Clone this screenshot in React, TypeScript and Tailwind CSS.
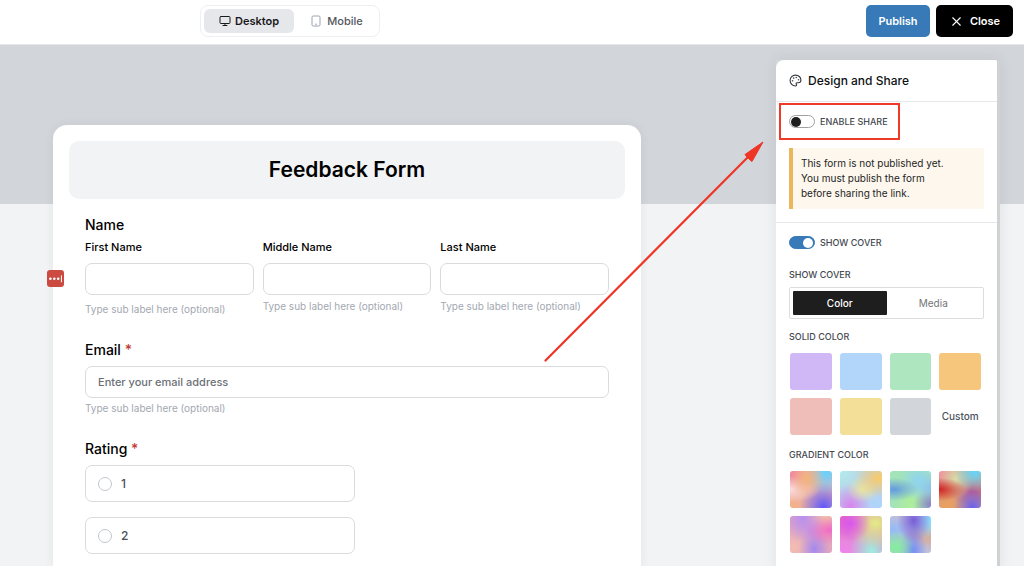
import { useState } from 'react'
import { Monitor, Palette, X } from 'lucide-react'

const solids = [
  { name: 'Purple', className: 'bg-[#d0b8f6]' },
  { name: 'Blue', className: 'bg-[#b2d6f9]' },
  { name: 'Green', className: 'bg-[#aee6bf]' },
  { name: 'Orange', className: 'bg-[#f6c67c]' },
  { name: 'Rose', className: 'bg-[#f0beb8]' },
  { name: 'Yellow', className: 'bg-[#f4df98]' },
  { name: 'Gray', className: 'bg-[#d2d5da]' },
]

const gradients = [
  {
    name: 'Sunrise',
    className:
      'bg-[#e6b0b4] bg-[radial-gradient(at_40%_20%,#f3b57c_0px,transparent_50%),radial-gradient(at_85%_5%,#63d3ff_0px,transparent_45%),radial-gradient(at_0%_50%,#fbdcdf_0px,transparent_50%),radial-gradient(at_80%_98%,#6058f8_0px,transparent_50%),radial-gradient(at_0%_100%,#f5b183_0px,transparent_50%),radial-gradient(at_0%_0%,#f27f9f_0px,transparent_50%)]',
  },
  {
    name: 'Pastel',
    className:
      'bg-[#b9d0ea] bg-[radial-gradient(at_92%_20%,#f9cb68_0px,transparent_45%),radial-gradient(at_55%_50%,#e9e5a0_0px,transparent_50%),radial-gradient(at_25%_95%,#d884ee_0px,transparent_45%),radial-gradient(at_90%_95%,#aed4fb_0px,transparent_50%),radial-gradient(at_0%_0%,#b2ecea_0px,transparent_50%)]',
  },
  {
    name: 'Lagoon',
    className:
      'bg-[#a4e3b8] bg-[radial-gradient(at_10%_50%,#629ae0_0px,transparent_45%),radial-gradient(at_70%_25%,#8fd5ef_0px,transparent_50%),radial-gradient(at_100%_90%,#8a7fc6_0px,transparent_30%),radial-gradient(at_50%_95%,#aeee9a_0px,transparent_60%),radial-gradient(at_100%_45%,#8fb6e8_0px,transparent_50%)]',
  },
  {
    name: 'Ember',
    className:
      'bg-[#d59a80] bg-[radial-gradient(at_0%_50%,#cf2424_0px,transparent_45%),radial-gradient(at_85%_2%,#5fd8ff_0px,transparent_40%),radial-gradient(at_40%_20%,#d8dba8_0px,transparent_50%),radial-gradient(at_80%_98%,#6a60f0_0px,transparent_40%),radial-gradient(at_80%_55%,#c05a80_0px,transparent_50%),radial-gradient(at_20%_95%,#eaa060_0px,transparent_50%),radial-gradient(at_0%_0%,#f58fa0_0px,transparent_45%)]',
  },
  {
    name: 'Blossom',
    className:
      'bg-[#e3a6bd] bg-[radial-gradient(at_30%_5%,#b88ff0_0px,transparent_50%),radial-gradient(at_95%_38%,#f06cc6_0px,transparent_45%),radial-gradient(at_58%_90%,#a488f0_0px,transparent_45%),radial-gradient(at_5%_85%,#f3bdb2_0px,transparent_55%),radial-gradient(at_50%_45%,#cf92dc_0px,transparent_50%),radial-gradient(at_85%_0%,#f3c2a8_0px,transparent_50%)]',
  },
  {
    name: 'Orchid',
    className:
      'bg-[#dd8fc0] bg-[radial-gradient(at_24%_20%,#d955f0_0px,transparent_45%),radial-gradient(at_85%_20%,#e4ec84_0px,transparent_60%),radial-gradient(at_75%_95%,#9eeee2_0px,transparent_50%),radial-gradient(at_10%_95%,#ee84ee_0px,transparent_55%),radial-gradient(at_0%_0%,#ee6aa8_0px,transparent_50%)]',
  },
  {
    name: 'Aurora',
    className:
      'bg-[#c0bfd8] bg-[radial-gradient(at_58%_12%,#7a5cd8_0px,transparent_50%),radial-gradient(at_14%_85%,#7ff09c_0px,transparent_40%),radial-gradient(at_55%_92%,#7088f8_0px,transparent_45%),radial-gradient(at_100%_10%,#84ddfa_0px,transparent_45%),radial-gradient(at_95%_55%,#e0a890_0px,transparent_45%),radial-gradient(at_5%_38%,#92baf8_0px,transparent_45%)]',
  },
]

const subLabel = 'Type sub label here (optional)'

function PhoneIcon() {
  return (
    <svg viewBox="0 0 10 12" className="h-3 w-[10px]" fill="none" stroke="#9ca3af">
      <rect x="1" y="1" width="8" height="10" rx="1.2" />
      <path d="M4.5 9.2h1" strokeLinecap="round" />
    </svg>
  )
}

function Header() {
  return (
    <header className="flex items-center justify-between border-b border-[#e6e8eb] bg-white pt-[5px] pr-[11px] pb-[7px] pl-[200px]">
      <div className="flex h-8 gap-1 rounded-lg border border-[#eeeff1] p-[3px]">
        <button className="flex w-[90px] items-center justify-center gap-1 rounded-md bg-[#e6e7eb] text-[11px] font-semibold text-[#18191b]">
          <Monitor size={12} />
          Desktop
        </button>
        <button className="flex w-[78px] items-center justify-center gap-[6px] text-[11px] font-medium text-[#55585e]">
          <PhoneIcon />
          Mobile
        </button>
      </div>
      <div className="flex h-8 gap-[6px] text-[11px] font-semibold text-white">
        <button className="w-16 rounded-[5px] bg-[#377ab7]">Publish</button>
        <button className="flex w-[77px] items-center justify-center gap-[6px] rounded-[5px] bg-black">
          <X size={15} strokeWidth={1.75} />
          Close
        </button>
      </div>
    </header>
  )
}

function NameField({ id, label, first }: { id: string; label: string; first?: boolean }) {
  return (
    <div>
      <label htmlFor={id} className="block text-[11px] leading-4 font-medium">{label}</label>
      <input id={id} className="mt-2 block h-8 w-full rounded-[7px] border border-[#d9dbdf] bg-white px-3 text-[11px]" />
      <p className={first ? 'mt-2 text-[10px] leading-3 text-[#a3a8b1]' : 'mt-[5px] text-[10px] leading-3 text-[#a3a8b1]'}>
        {subLabel}
      </p>
    </div>
  )
}

function RatingOption({ value }: { value: string }) {
  return (
    <label className="flex h-[37px] items-center gap-[9px] rounded-[7px] border border-[#d9dbdf] px-3 text-[12px] font-medium text-[#4b5058]">
      <input type="radio" name="rating" value={value} className="size-[14px] appearance-none rounded-full border border-[#c3c7ce] checked:border-4" />
      {value}
    </label>
  )
}

function FeedbackForm() {
  return (
    <form className="flex-1 rounded-t-[14px] bg-white p-4 text-black shadow-[0_0_12px_rgba(0,0,0,0.06)]">
      <div className="flex h-[58px] items-center justify-center rounded-[10px] bg-[#f2f3f5]">
        <h1 className="text-[21px] font-semibold">Feedback Form</h1>
      </div>
      <div className="px-4 pt-4">
        <fieldset>
          <legend className="text-[14px] leading-5 font-medium">Name</legend>
          <div className="relative mt-1 grid grid-cols-3 gap-[9px]">
            <NameField id="first" label="First Name" first />
            <NameField id="middle" label="Middle Name" />
            <NameField id="last" label="Last Name" />
            <svg viewBox="0 0 17 17" className="absolute top-[31px] -left-[38px] size-[17px]">
              <rect width="17" height="17" rx="3" fill="#cb4b41" />
              <g fill="#fff">
                <circle cx="3.4" cy="8.7" r="1.3" />
                <circle cx="7.3" cy="8.7" r="1.3" />
                <circle cx="11.2" cy="8.7" r="1.3" />
                <rect x="13.9" y="5.4" width="1" height="6.8" />
              </g>
            </svg>
          </div>
        </fieldset>

        <div className="mt-[25px]">
          <label htmlFor="email" className="block text-[14px] leading-5 font-medium">
            Email <span className="text-[#c23a34]">*</span>
          </label>
          <input
            id="email"
            type="email"
            placeholder="Enter your email address"
            className="mt-[6px] block h-8 w-full rounded-[7px] border border-[#d9dbdf] bg-white px-3 text-[11px] font-medium placeholder:text-[#6b7078]"
          />
          <p className="mt-1 text-[10px] leading-3 text-[#a3a8b1]">{subLabel}</p>
        </div>

        <fieldset className="mt-[25px]">
          <legend className="text-[14px] leading-5 font-medium">
            Rating <span className="text-[#c23a34]">*</span>
          </legend>
          <div className="mt-[6px] flex w-[270px] flex-col gap-[15px]">
            <RatingOption value="1" />
            <RatingOption value="2" />
          </div>
        </fieldset>
      </div>
    </form>
  )
}

function Switch({ label, checked, onChange }: { label: string; checked: boolean; onChange: (value: boolean) => void }) {
  return (
    <label className="flex items-center gap-[5px] text-[9px] leading-3 font-medium text-[#454950]">
      <input
        type="checkbox"
        role="switch"
        checked={checked}
        onChange={(e) => onChange(e.target.checked)}
        className="flex h-[13px] w-[26px] appearance-none items-center rounded-full border border-[#a0a0a0] bg-white px-px before:size-[10px] before:rounded-full before:bg-[#1e1e1e] checked:justify-end checked:border-[#377ab7] checked:bg-[#377ab7] checked:before:bg-white"
      />
      {label}
    </label>
  )
}

function DesignPanel() {
  const [share, setShare] = useState(false)
  const [cover, setCover] = useState(true)

  return (
    <aside className="flex w-[224px] shadow-[0_0_14px_rgba(0,0,0,0.08)]">
      <div className="flex-1 rounded-tl-lg rounded-tr-xs bg-white">
        <div className="flex h-[42px] items-center gap-[6px] border-b border-[#e6e7ea] px-[13px]">
          <Palette size={13} className="text-[#33363b]" />
          <h2 className="text-[12px] font-medium text-[#101113]">Design and Share</h2>
        </div>

        <div className="relative border-b border-[#e6e7ea] px-[13px] pt-[13px] pb-[13px]">
          <Switch label="ENABLE SHARE" checked={share} onChange={setShare} />
          <span className="pointer-events-none absolute top-px left-[3px] h-[37px] w-[121px] border-2 border-[#ee3a26]" />
          <p className="mt-5 border-l-4 border-[#e8b85a] bg-[#fdf7ee] py-2 pr-7 pl-2 text-[10px] leading-[15px] text-[#1e1e1e]">
            This form is not published yet. You must publish the form before sharing the link.
          </p>
        </div>

        <div className="px-[13px] pt-[13px]">
          <Switch label="SHOW COVER" checked={cover} onChange={setCover} />

          <h3 className="mt-5 text-[9px] leading-3 font-medium text-[#454950]">SHOW COVER</h3>
          <div className="mt-[6px] flex h-8 rounded-xs border border-[#dddddf] p-[3px] text-[10px]">
            <button className="flex-1 rounded-[1px] bg-[#1e1e1e] font-medium text-white">Color</button>
            <button className="flex-1 text-[#757575]">Media</button>
          </div>

          <h3 className="mt-3 text-[9px] leading-3 font-medium text-[#454950]">SOLID COLOR</h3>
          <div className="mt-[10px] grid grid-cols-4 gap-2 pr-[3px] pl-px">
            {solids.map((s) => (
              <button key={s.name} aria-label={s.name} className={`h-[37px] rounded-[3px] ${s.className}`} />
            ))}
            <button className="text-[10px] font-medium text-[#4b525c]">Custom</button>
          </div>

          <h3 className="mt-[14px] text-[9px] leading-3 font-medium text-[#454950]">GRADIENT COLOR</h3>
          <div className="mt-[10px] grid grid-cols-4 gap-2 pr-[3px] pl-px">
            {gradients.map((g) => (
              <button key={g.name} aria-label={g.name} className={`h-[37px] rounded-[3px] ${g.className}`} />
            ))}
          </div>
        </div>
      </div>
      <div className="w-[3px] bg-[#d0d1d2]" />
    </aside>
  )
}

export default function App() {
  return (
    <div className="flex h-screen flex-col overflow-hidden bg-[#f2f3f5] font-['Inter',sans-serif]">
      <Header />
      <main className="relative grid min-h-0 flex-1">
        <div className="col-start-1 row-start-1 h-[159px] bg-[#d2d5da]" />
        <div className="col-start-1 row-start-1 flex gap-[135px] pr-6 pl-[53px]">
          <div className="flex flex-1 pt-20">
            <FeedbackForm />
          </div>
          <div className="flex pt-[15px]">
            <DesignPanel />
          </div>
        </div>
        {/* pointer to the share switch */}
        <svg viewBox="0 0 220 221" className="pointer-events-none absolute top-[96px] right-[260px] h-[221px] w-[220px]">
          <path d="M1.5 219.5 205 15" stroke="#ee3526" strokeWidth="2.2" strokeLinecap="round" />
          <path d="M219 1 201 13.5l1.6 2.2 3.4 3.2 2 1.6Z" fill="#ee3526" stroke="#ee3526" strokeLinejoin="round" />
        </svg>
      </main>
    </div>
  )
}
